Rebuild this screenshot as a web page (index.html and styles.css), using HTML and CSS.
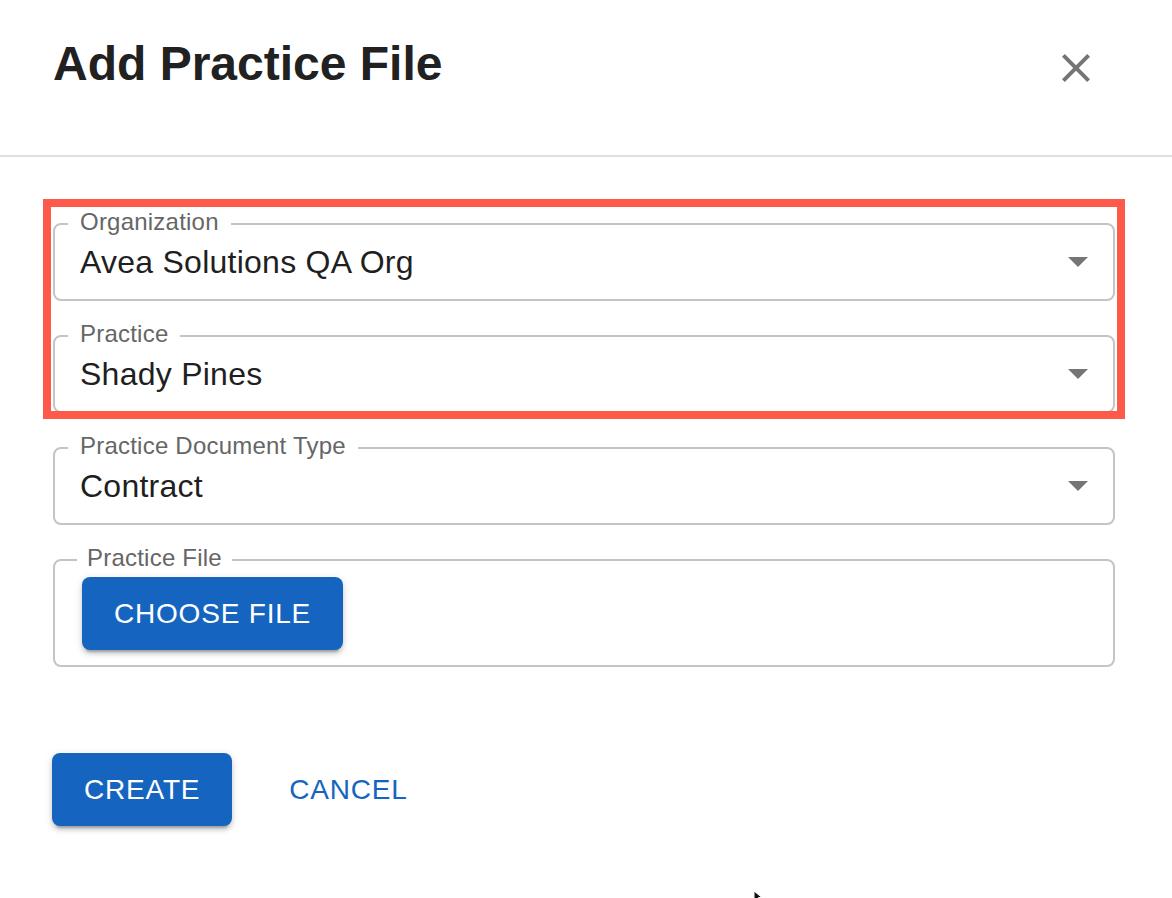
FILE: index.html
```html
<!DOCTYPE html>
<html lang="en">
<head>
<meta charset="utf-8">
<title>Add Practice File</title>
<link rel="stylesheet" href="styles.css">
</head>
<body>
<div class="dialog">
  <header class="dialog-header">
    <h1 class="dialog-title">Add Practice File</h1>
    <button class="icon-button" aria-label="close">
      <svg class="icon" viewBox="0 0 24 24" width="48" height="48"><path d="M19 6.41L17.59 5 12 10.59 6.41 5 5 6.41 10.59 12 5 17.59 6.41 19 12 13.41 17.59 19 19 17.59 13.41 12z"/></svg>
    </button>
  </header>
  <div class="dialog-content">
    <div class="field">
      <span class="field-label">Organization</span>
      <span class="field-value">Avea Solutions QA Org</span>
      <svg class="icon arrow" viewBox="0 0 24 24" width="48" height="48"><path d="M7 10l5 5 5-5z"/></svg>
    </div>
    <div class="field">
      <span class="field-label">Practice</span>
      <span class="field-value">Shady Pines</span>
      <svg class="icon arrow" viewBox="0 0 24 24" width="48" height="48"><path d="M7 10l5 5 5-5z"/></svg>
    </div>
    <div class="field">
      <span class="field-label">Practice Document Type</span>
      <span class="field-value">Contract</span>
      <svg class="icon arrow" viewBox="0 0 24 24" width="48" height="48"><path d="M7 10l5 5 5-5z"/></svg>
    </div>
    <div class="field field-file">
      <span class="field-label file-label">Practice File</span>
      <button class="btn btn-contained">Choose File</button>
    </div>
    <div class="actions">
      <button class="btn btn-contained">Create</button>
      <button class="btn btn-text">Cancel</button>
    </div>
  </div>
</div>
<div class="highlight"></div>
<svg class="cursor" viewBox="0 0 12 12" width="12" height="12"><path d="M1 1 L1 11 L3.5 8.5 L5 12 L7 11 L5.5 7.5 L9 7.5 Z" fill="#111" stroke="#fff" stroke-width="1"/></svg>
</body>
</html>
```

FILE: styles.css
```css
* { box-sizing: border-box; }

html, body {
  margin: 0;
  padding: 0;
  background: #ffffff;
  font-family: "Liberation Sans", Arial, Helvetica, sans-serif;
  color: rgba(0, 0, 0, 0.87);
}

.dialog {
  width: 1172px;
  height: 898px;
  overflow: hidden;
}

.dialog-header {
  display: flex;
  align-items: flex-start;
  justify-content: space-between;
  height: 157px;
  padding: 40px 72px 0 53px;
  border-bottom: 2px solid #e0e0e0;
}

.dialog-title {
  margin: 0;
  font-size: 48px;
  line-height: 48px;
  font-weight: 700;
  color: #212121;
}

.icon-button {
  margin: 4px 0 0 0;
  padding: 0;
  border: 0;
  background: transparent;
  width: 48px;
  height: 48px;
  display: flex;
}

.icon {
  fill: #757575;
  display: block;
  flex: none;
}

.dialog-content {
  display: flex;
  flex-direction: column;
  padding: 66px 57px 0 53px;
}

.field {
  position: relative;
  height: 78px;
  border: 2px solid #c4c4c4;
  border-radius: 8px;
  display: flex;
  align-items: center;
  padding: 0 11px 0 25px;
  margin-bottom: 34px;
}

.field-label {
  position: absolute;
  top: -15px;
  left: 13px;
  padding: 0 12px;
  background: #ffffff;
  font-size: 24px;
  line-height: 24px;
  letter-spacing: 0.22px;
  color: #666666;
  white-space: nowrap;
}

.file-label {
  padding: 0 10px;
  left: 22px;
}

.field-value {
  flex: 1;
  font-size: 32px;
  line-height: 36px;
  letter-spacing: 0.25px;
  margin-top: -1px;
  color: #1f1f1f;
}

.arrow {
  margin-top: -2px;
}

.field-file {
  height: 108px;
  align-items: flex-start;
  padding: 16px 27px;
  margin-bottom: 86px;
}

.btn {
  font-family: "Liberation Sans", Arial, Helvetica, sans-serif;
  font-size: 28px;
  line-height: 49px;
  letter-spacing: 0.8px;
  text-transform: uppercase;
  border: 0;
  border-radius: 8px;
  padding: 12px 32px;
  cursor: pointer;
}

.btn-contained {
  background: #1565c0;
  color: #ffffff;
  box-shadow: 0 6px 2px -4px rgba(0, 0, 0, 0.2), 0 4px 4px 0 rgba(0, 0, 0, 0.14), 0 2px 10px 0 rgba(0, 0, 0, 0.12);
}

.btn-text {
  background: transparent;
  color: #1565c0;
  padding: 12px 16px;
}

.actions {
  display: flex;
  gap: 41px;
  margin-left: -1px;
}

.highlight {
  position: absolute;
  left: 43px;
  top: 199px;
  width: 1082px;
  height: 220px;
  border: 8px solid #fd5a4b;
  pointer-events: none;
}

.cursor {
  position: absolute;
  left: 753px;
  top: 890px;
}
```
